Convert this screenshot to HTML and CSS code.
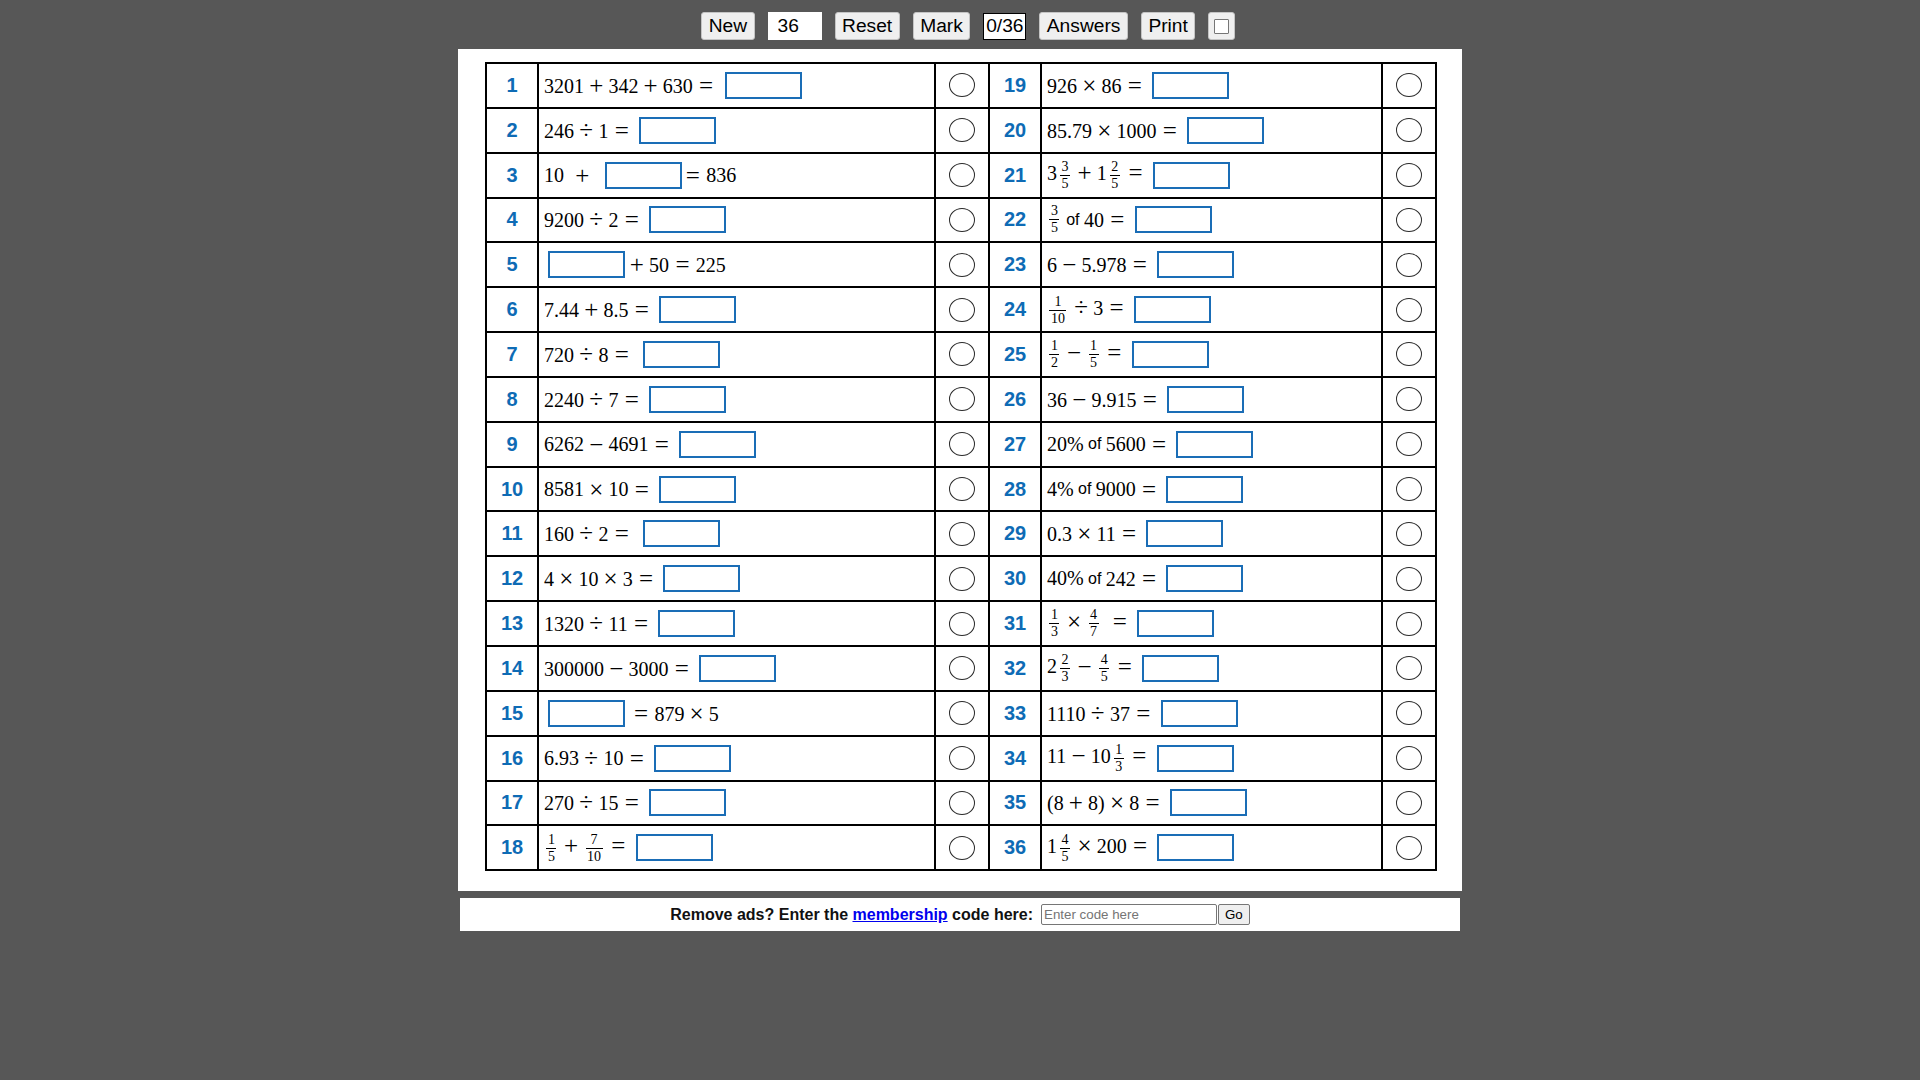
FILE: index.html
```html
<!DOCTYPE html>
<html>
<head>
<meta charset="utf-8">
<title>Mental Maths</title>
<link rel="stylesheet" href="styles.css">
</head>
<body>
<div class="toolbar">
  <button class="btn">New</button>
  <input class="count" type="text" value="36">
  <button class="btn">Reset</button>
  <button class="btn">Mark</button>
  <span class="score">0/36</span>
  <button class="btn">Answers</button>
  <button class="btn">Print</button>
  <button class="btn chk"><span class="sq"></span></button>
</div>

<div class="sheet">
<table class="qs">
<colgroup>
<col class="c-num"><col class="c-q1"><col class="c-mk"><col class="c-num2"><col class="c-q2"><col class="c-mk2">
</colgroup>
<tbody>
<tr>
<td class="num">1</td>
<td class="q"><span class="m">3201<span class="op">+</span>342<span class="op">+</span>630<span class="rel">=</span></span><span class="box box-1"></span></td>
<td class="mk"><span class="circ"></span></td>
<td class="num">19</td>
<td class="q"><span class="m">926<span class="op">×</span>86<span class="rel">=</span></span><span class="box"></span></td>
<td class="mk"><span class="circ"></span></td>
</tr>
<tr>
<td class="num">2</td>
<td class="q"><span class="m">246<span class="op">÷</span>1<span class="rel">=</span></span><span class="box"></span></td>
<td class="mk"><span class="circ"></span></td>
<td class="num">20</td>
<td class="q"><span class="m">85.79<span class="op">×</span>1000<span class="rel">=</span></span><span class="box"></span></td>
<td class="mk"><span class="circ"></span></td>
</tr>
<tr>
<td class="num">3</td>
<td class="q"><span class="m">10<span class="op op-wide">+</span></span><span class="box box-wide"></span><span class="m"><span class="rel rel-tight">=</span>836</span></td>
<td class="mk"><span class="circ"></span></td>
<td class="num">21</td>
<td class="q"><span class="m">3<span class="fr fr-mix"><span class="nu">3</span><span class="de">5</span></span><span class="op">+</span>1<span class="fr fr-mix"><span class="nu">2</span><span class="de">5</span></span><span class="rel">=</span></span><span class="box"></span></td>
<td class="mk"><span class="circ"></span></td>
</tr>
<tr>
<td class="num">4</td>
<td class="q"><span class="m">9200<span class="op">÷</span>2<span class="rel">=</span></span><span class="box"></span></td>
<td class="mk"><span class="circ"></span></td>
<td class="num">22</td>
<td class="q"><span class="m"><span class="fr"><span class="nu">3</span><span class="de">5</span></span></span><span class="txt">of</span><span class="m">40<span class="rel">=</span></span><span class="box"></span></td>
<td class="mk"><span class="circ"></span></td>
</tr>
<tr>
<td class="num">5</td>
<td class="q"><span class="box box-first"></span><span class="m"><span class="op">+</span>50<span class="rel">=</span>225</span></td>
<td class="mk"><span class="circ"></span></td>
<td class="num">23</td>
<td class="q"><span class="m">6<span class="op">−</span>5.978<span class="rel">=</span></span><span class="box"></span></td>
<td class="mk"><span class="circ"></span></td>
</tr>
<tr>
<td class="num">6</td>
<td class="q"><span class="m">7.44<span class="op">+</span>8.5<span class="rel">=</span></span><span class="box"></span></td>
<td class="mk"><span class="circ"></span></td>
<td class="num">24</td>
<td class="q"><span class="m"><span class="fr"><span class="nu">1</span><span class="de">10</span></span><span class="op">÷</span>3<span class="rel">=</span></span><span class="box"></span></td>
<td class="mk"><span class="circ"></span></td>
</tr>
<tr>
<td class="num">7</td>
<td class="q"><span class="m">720<span class="op">÷</span>8<span class="rel">=</span></span><span class="box box-sp"></span></td>
<td class="mk"><span class="circ"></span></td>
<td class="num">25</td>
<td class="q"><span class="m"><span class="fr"><span class="nu">1</span><span class="de">2</span></span><span class="op">−</span><span class="fr"><span class="nu">1</span><span class="de">5</span></span><span class="rel">=</span></span><span class="box"></span></td>
<td class="mk"><span class="circ"></span></td>
</tr>
<tr>
<td class="num">8</td>
<td class="q"><span class="m">2240<span class="op">÷</span>7<span class="rel">=</span></span><span class="box"></span></td>
<td class="mk"><span class="circ"></span></td>
<td class="num">26</td>
<td class="q"><span class="m">36<span class="op">−</span>9.915<span class="rel">=</span></span><span class="box"></span></td>
<td class="mk"><span class="circ"></span></td>
</tr>
<tr>
<td class="num">9</td>
<td class="q"><span class="m">6262<span class="op">−</span>4691<span class="rel">=</span></span><span class="box"></span></td>
<td class="mk"><span class="circ"></span></td>
<td class="num">27</td>
<td class="q"><span class="m">20%</span><span class="txt">of</span><span class="m">5600<span class="rel">=</span></span><span class="box"></span></td>
<td class="mk"><span class="circ"></span></td>
</tr>
<tr>
<td class="num">10</td>
<td class="q"><span class="m">8581<span class="op">×</span>10<span class="rel">=</span></span><span class="box"></span></td>
<td class="mk"><span class="circ"></span></td>
<td class="num">28</td>
<td class="q"><span class="m">4%</span><span class="txt">of</span><span class="m">9000<span class="rel">=</span></span><span class="box"></span></td>
<td class="mk"><span class="circ"></span></td>
</tr>
<tr>
<td class="num">11</td>
<td class="q"><span class="m">160<span class="op">÷</span>2<span class="rel">=</span></span><span class="box box-sp"></span></td>
<td class="mk"><span class="circ"></span></td>
<td class="num">29</td>
<td class="q"><span class="m">0.3<span class="op">×</span>11<span class="rel">=</span></span><span class="box"></span></td>
<td class="mk"><span class="circ"></span></td>
</tr>
<tr>
<td class="num">12</td>
<td class="q"><span class="m">4<span class="op">×</span>10<span class="op">×</span>3<span class="rel">=</span></span><span class="box"></span></td>
<td class="mk"><span class="circ"></span></td>
<td class="num">30</td>
<td class="q"><span class="m">40%</span><span class="txt">of</span><span class="m">242<span class="rel">=</span></span><span class="box"></span></td>
<td class="mk"><span class="circ"></span></td>
</tr>
<tr>
<td class="num">13</td>
<td class="q"><span class="m">1320<span class="op">÷</span>11<span class="rel">=</span></span><span class="box"></span></td>
<td class="mk"><span class="circ"></span></td>
<td class="num">31</td>
<td class="q"><span class="m"><span class="fr"><span class="nu">1</span><span class="de">3</span></span><span class="op">×</span><span class="fr"><span class="nu">4</span><span class="de">7</span></span><span class="rel rel-sp">=</span></span><span class="box"></span></td>
<td class="mk"><span class="circ"></span></td>
</tr>
<tr>
<td class="num">14</td>
<td class="q"><span class="m">300000<span class="op">−</span>3000<span class="rel">=</span></span><span class="box"></span></td>
<td class="mk"><span class="circ"></span></td>
<td class="num">32</td>
<td class="q"><span class="m">2<span class="fr fr-mix"><span class="nu">2</span><span class="de">3</span></span><span class="op">−</span><span class="fr"><span class="nu">4</span><span class="de">5</span></span><span class="rel">=</span></span><span class="box"></span></td>
<td class="mk"><span class="circ"></span></td>
</tr>
<tr>
<td class="num">15</td>
<td class="q"><span class="box box-first"></span><span class="m"><span class="rel rel-lead">=</span>879<span class="op">×</span>5</span></td>
<td class="mk"><span class="circ"></span></td>
<td class="num">33</td>
<td class="q"><span class="m">1110<span class="op">÷</span>37<span class="rel">=</span></span><span class="box"></span></td>
<td class="mk"><span class="circ"></span></td>
</tr>
<tr>
<td class="num">16</td>
<td class="q"><span class="m">6.93<span class="op">÷</span>10<span class="rel">=</span></span><span class="box"></span></td>
<td class="mk"><span class="circ"></span></td>
<td class="num">34</td>
<td class="q"><span class="m">11<span class="op">−</span>10<span class="fr fr-mix"><span class="nu">1</span><span class="de">3</span></span><span class="rel">=</span></span><span class="box"></span></td>
<td class="mk"><span class="circ"></span></td>
</tr>
<tr>
<td class="num">17</td>
<td class="q"><span class="m">270<span class="op">÷</span>15<span class="rel">=</span></span><span class="box"></span></td>
<td class="mk"><span class="circ"></span></td>
<td class="num">35</td>
<td class="q"><span class="m">(8<span class="op">+</span>8)<span class="op">×</span>8<span class="rel">=</span></span><span class="box"></span></td>
<td class="mk"><span class="circ"></span></td>
</tr>
<tr>
<td class="num">18</td>
<td class="q"><span class="m"><span class="fr"><span class="nu">1</span><span class="de">5</span></span><span class="op">+</span><span class="fr"><span class="nu">7</span><span class="de">10</span></span><span class="rel">=</span></span><span class="box"></span></td>
<td class="mk"><span class="circ"></span></td>
<td class="num">36</td>
<td class="q"><span class="m">1<span class="fr fr-mix"><span class="nu">4</span><span class="de">5</span></span><span class="op">×</span>200<span class="rel">=</span></span><span class="box"></span></td>
<td class="mk"><span class="circ"></span></td>
</tr>
</tbody>
</table>
</div>

<div class="ads">
  <span class="ads-text">Remove ads? Enter the <a href="#" class="ads-link">membership</a> code here:</span>
  <input class="code" type="text" placeholder="Enter code here">
  <button class="go">Go</button>
</div>
</body>
</html>
```

FILE: styles.css
```css
html, body {
  margin: 0;
  padding: 0;
}
body {
  background: #575757;
  font-family: "Liberation Sans", Arial, sans-serif;
  font-size: 16px;
  padding-top: 12px;
  min-height: 1068px;
}

/* toolbar */
.toolbar {
  display: flex;
  justify-content: center;
  align-items: center;
  gap: 13px;
  height: 28px;
  padding-left: 16px;
}
.btn {
  font-family: "Liberation Sans", Arial, sans-serif;
  font-size: 19.2px;
  height: 28px;
  padding: 0 6.5px;
  margin: 0;
  background: #efefef;
  color: #000;
  border: 1px solid #c4c4c4;
  border-radius: 3px;
  line-height: 1;
}
.count {
  font-family: "Liberation Sans", Arial, sans-serif;
  font-size: 19.2px;
  width: 54px;
  height: 28px;
  box-sizing: border-box;
  border: 1px solid #fff;
  padding: 0 0 0 9px;
  margin: 0;
  background: #fff;
  color: #000;
  outline: none;
}
.score {
  display: flex;
  align-items: center;
  justify-content: center;
  box-sizing: border-box;
  width: 43px;
  height: 27px;
  background: #fff;
  border: 1px solid #000;
  font-size: 19.2px;
  color: #000;
}
.chk {
  width: 26.5px;
  padding: 0;
  display: flex;
  align-items: center;
  justify-content: center;
}
.sq {
  display: block;
  width: 15px;
  height: 15px;
  box-sizing: border-box;
  border: 1px solid #767676;
  background: #fff;
  border-radius: 1px;
}

/* sheet */
.sheet {
  width: 1004px;
  box-sizing: border-box;
  margin: 9px auto 0;
  background: #fff;
  padding: 13px 27px 20px;
}
.qs {
  border-collapse: collapse;
  table-layout: fixed;
  width: 950px;
}
.c-num { width: 52px; }
.c-q1 { width: 397px; }
.c-mk { width: 54px; }
.c-num2 { width: 52px; }
.c-q2 { width: 341px; }
.c-mk2 { width: 54px; }
.qs tr {
  height: 44.85px;
}
.qs td {
  border: 2px solid #000;
  padding: 0;
  vertical-align: middle;
  white-space: nowrap;
}
.num {
  text-align: center;
  color: #0e6bb5;
  font-weight: bold;
  font-size: 20px;
  font-family: "Liberation Sans", Arial, sans-serif;
}
.q {
  padding-left: 5px !important;
  font-size: 16px;
}
.mk {
  text-align: center;
}
.circ {
  display: block;
  margin: 0 auto;
  width: 26px;
  height: 24px;
  box-sizing: border-box;
  border: 1px solid #2a2a2a;
  border-radius: 50%;
}

/* maths */
.m {
  font-family: "Liberation Serif", "Times New Roman", serif;
  font-size: 20px;
  color: #000;
  vertical-align: middle;
}
.op, .rel {
  display: inline-block;
  width: 15.56px;
  text-align: center;
  font-size: 25px;
  line-height: 1;
  vertical-align: -1.2px;
}
.op {
  margin: 0 4.44px;
}
.rel {
  margin: 0 5.56px;
}
.op-wide { margin-left: 10.5px; margin-right: 0; }
.rel-tight { margin-left: 3px; }
.rel-sp { margin-left: 11px; }
.rel-lead { margin-left: 8.6px; }
.box {
  display: inline-block;
  box-sizing: border-box;
  width: 77px;
  height: 27px;
  border: 2px solid #1a6db6;
  vertical-align: middle;
  margin-left: 4px;
}
.box-1 { margin-left: 6px; }
.box-first { margin-left: 3.7px; }
.box-wide { margin-left: 15px; }
.box-sp { margin-left: 8px; }
.fr {
  display: inline-flex;
  flex-direction: column;
  align-items: stretch;
  vertical-align: middle;
  font-size: 14px;
  line-height: 12px;
  margin: 0 2.4px;
  text-align: center;
}
.fr-mix { margin-left: 3px; }
.nu {
  display: block;
  padding: 0 1.5px 2px;
  border-bottom: 1px solid #000;
}
.de {
  display: block;
  padding: 2px 1.5px 0;
}
.txt {
  font-family: "Liberation Sans", Arial, sans-serif;
  font-size: 16px;
  color: #000;
  vertical-align: middle;
  margin: 0 4.4px;
}

/* ads bar */
.ads {
  width: 1000px;
  height: 33px;
  margin: 7px auto 0;
  background: #fff;
  display: flex;
  align-items: center;
  justify-content: center;
}
.ads-text {
  font-weight: bold;
  font-size: 16px;
  color: #111;
}
.ads-link {
  color: #0000ee;
  text-decoration: underline;
}
.code {
  width: 176px;
  height: 21px;
  box-sizing: border-box;
  margin: 0 0 0 8px;
  padding: 1px 2px;
  border: 1px solid #767676;
  font-family: "Liberation Sans", Arial, sans-serif;
  font-size: 13.33px;
  border-radius: 2px;
}
.code::placeholder {
  color: #757575;
}
.go {
  height: 21px;
  margin: 0 0 0 1px;
  padding: 0 6px;
  font-family: "Liberation Sans", Arial, sans-serif;
  font-size: 13.33px;
  background: #efefef;
  border: 1px solid #767676;
  border-radius: 2px;
  color: #000;
}
```
